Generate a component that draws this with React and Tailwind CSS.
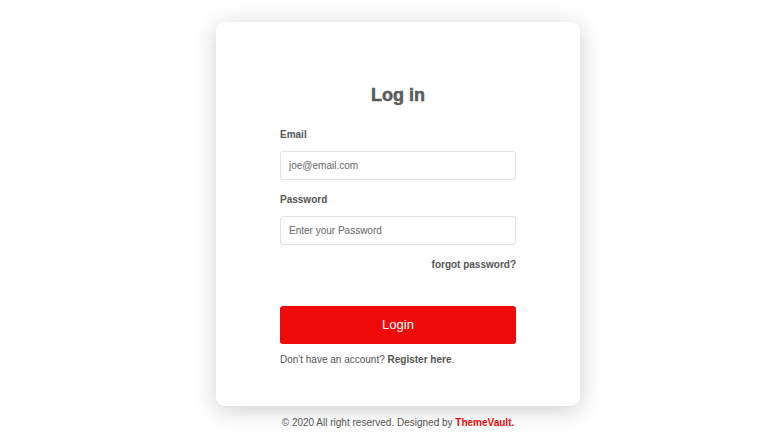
const Field = ({ label, type, placeholder }) => (
  <div>
    <label className="block text-[10px] leading-[14px] font-bold text-[#555]">{label}</label>
    <input
      type={type}
      placeholder={placeholder}
      className="mt-[9px] block w-full h-[29px] px-2 rounded-[3px] border border-[#e3e3e3] bg-white text-[10px] text-[#555] placeholder:text-[#666] outline-none"
    />
  </div>
);

const App = () => {
  return (
    <div className="min-h-screen bg-white flex flex-col items-center pt-[22px] pl-4 font-['Liberation_Sans',Arial,sans-serif]">
      <div className="w-[364px] h-[384px] bg-white rounded-[9px] shadow-[0_4px_22px_rgba(0,0,0,0.2)] px-16 pt-[62px]">
        <h1 className="text-center text-[18px] leading-[22px] font-bold text-[#5a5a5a] [-webkit-text-stroke:0.5px_#5a5a5a]">
          Log in
        </h1>
        <div className="mt-[22px] flex flex-col gap-[13px]">
          <Field label="Email" type="email" placeholder="joe@email.com" />
          <Field label="Password" type="password" placeholder="Enter your Password" />
        </div>
        <div className="mt-[13px] text-right text-[10px] leading-[14px] font-bold text-[#555]">
          <a href="#">forgot password?</a>
        </div>
        <button className="mt-[34px] w-full h-[38px] rounded-[3px] bg-[#ef0a0a] text-white text-[13px]">
          Login
        </button>
        <p className="mt-[9px] text-[10px] leading-[14px] text-[#555]">
          Don't have an account? <a href="#" className="font-bold">Register here</a>.
        </p>
      </div>
      <p className="mt-[10px] text-[10px] leading-[14px] text-[#555]">
        © 2020 All right reserved. Designed by{" "}
        <a href="#" className="font-bold text-[#ef0a0a]">ThemeVault.</a>
      </p>
    </div>
  );
};

export default App;
